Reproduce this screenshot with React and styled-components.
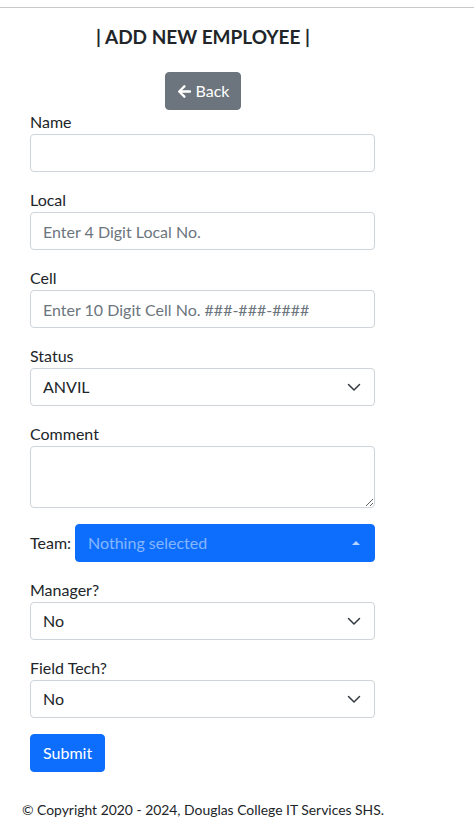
import React from "react";
import styled, { createGlobalStyle } from "styled-components";
import { FaArrowLeft } from "react-icons/fa";

const Global = createGlobalStyle`
  html, body { margin: 0; padding: 0; background: #fff; }
  body {
    font-family: Lato, "Noto Sans", sans-serif;
    font-size: 16px;
    line-height: 1.5;
    color: #212529;
  }
  * { box-sizing: border-box; }
`;

const Page = styled.div`
  width: 406px;
  display: flex;
  flex-direction: column;
`;

const TopRule = styled.div`
  height: 1px;
  width: 474px;
  margin-top: 7px;
  background: #c8c8c8;
`;

const Heading = styled.h1`
  margin: 17px 0 0;
  font-size: 19px;
  font-weight: 700;
  line-height: 24px;
  text-align: center;
  letter-spacing: 0;
`;

const BackRow = styled.div`
  display: flex;
  justify-content: center;
  margin-top: 23px;
`;

const Button = styled.button`
  display: inline-flex;
  align-items: center;
  gap: 4px;
  height: 38px;
  padding: 0 ${(p) => p.$px || 12}px;
  border: 1px solid ${(p) => p.$bg};
  border-radius: 4px;
  background: ${(p) => p.$bg};
  color: #fff;
  font-family: inherit;
  font-size: 16px;
  line-height: 24px;
  cursor: pointer;
`;

const Form = styled.form`
  display: flex;
  flex-direction: column;
  gap: 16px;
  padding: 0 31px 0 30px;
`;

const Field = styled.div`
  display: flex;
  flex-direction: column;
`;

const Label = styled.label`
  display: block;
  line-height: 24px;
  font-size: 16px;
`;

const controlBase = `
  width: 100%;
  height: 38px;
  padding: 6px 12px;
  border: 1px solid #ced4da;
  border-radius: 4px;
  background: #fff;
  font-family: inherit;
  font-size: 16px;
  line-height: 24px;
  color: #212529;
  outline: none;
`;

const Input = styled.input`
  ${controlBase}
  &::placeholder { color: #6c757d; opacity: 1; }
`;

const TextArea = styled.textarea`
  ${controlBase}
  height: 62px;
  resize: vertical;
  display: block;
`;

const SelectWrap = styled.div`
  position: relative;
  width: 100%;
`;

const Select = styled.select`
  ${controlBase}
  appearance: none;
  -webkit-appearance: none;
  padding-right: 36px;
`;

const Chevron = styled.svg`
  position: absolute;
  right: 13px;
  top: 11px;
  width: 16px;
  height: 16px;
  pointer-events: none;
`;

const TeamRow = styled.div`
  display: flex;
  align-items: center;
  gap: 4px;
`;

const TeamLabel = styled.span`
  line-height: 24px;
  white-space: nowrap;
`;

const TeamPicker = styled.button`
  flex: 1;
  display: flex;
  align-items: center;
  justify-content: space-between;
  height: 38px;
  padding: 0 12px;
  border: 1px solid #0d6efd;
  border-radius: 4px;
  background: #0d6efd;
  color: rgba(255, 255, 255, 0.5);
  font-family: inherit;
  font-size: 16px;
  line-height: 24px;
  text-align: left;
`;

const Caret = styled.span`
  width: 0;
  height: 0;
  margin-right: 2px;
  border-left: 4px solid transparent;
  border-right: 4px solid transparent;
  border-bottom: 4px solid rgba(255, 255, 255, 0.7);
`;

const SubmitRow = styled.div`
  display: flex;
`;

const Footer = styled.footer`
  margin-top: 26px;
  text-align: center;
  white-space: nowrap;
  font-size: 13.9px;
  line-height: 24px;
`;

function ChevronDown() {
  return (
    <Chevron viewBox="0 0 16 16">
      <path
        d="M2.5 5.5l5.5 5.5 5.5-5.5"
        fill="none"
        stroke="#343a40"
        strokeWidth="1.5"
        strokeLinecap="round"
        strokeLinejoin="round"
      />
    </Chevron>
  );
}

function SelectField({ label, options }) {
  return (
    <Field>
      <Label>{label}</Label>
      <SelectWrap>
        <Select defaultValue={options[0]}>
          {options.map((o) => (
            <option key={o}>{o}</option>
          ))}
        </Select>
        <ChevronDown />
      </SelectWrap>
    </Field>
  );
}

export default function App() {
  return (
    <>
      <Global />
      <TopRule />
      <Page>
        <Heading>| ADD NEW EMPLOYEE |</Heading>
        <BackRow>
          <Button type="button" $bg="#6c757d" $px={11}>
            <FaArrowLeft size={15} />
            Back
          </Button>
        </BackRow>
        <Form onSubmit={(e) => e.preventDefault()}>
          <Field>
            <Label>Name</Label>
            <Input type="text" />
          </Field>
          <Field>
            <Label>Local</Label>
            <Input type="text" placeholder="Enter 4 Digit Local No." />
          </Field>
          <Field>
            <Label>Cell</Label>
            <Input type="text" placeholder="Enter 10 Digit Cell No. ###-###-####" />
          </Field>
          <SelectField label="Status" options={["ANVIL", "ACTIVE", "INACTIVE"]} />
          <Field>
            <Label>Comment</Label>
            <TextArea />
          </Field>
          <TeamRow>
            <TeamLabel>Team:</TeamLabel>
            <TeamPicker type="button">
              Nothing selected
              <Caret />
            </TeamPicker>
          </TeamRow>
          <SelectField label="Manager?" options={["No", "Yes"]} />
          <SelectField label="Field Tech?" options={["No", "Yes"]} />
          <SubmitRow>
            <Button type="submit" $bg="#0d6efd">Submit</Button>
          </SubmitRow>
        </Form>
        <Footer>© Copyright 2020 - 2024, Douglas College IT Services SHS.</Footer>
      </Page>
    </>
  );
}
